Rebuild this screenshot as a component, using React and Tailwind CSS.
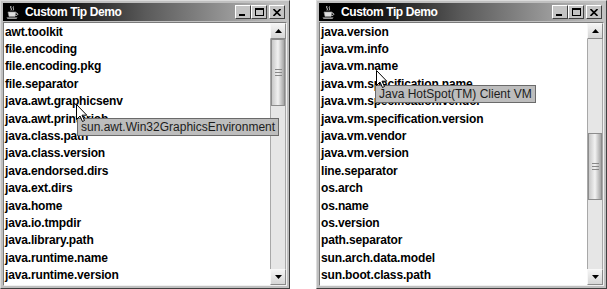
import React from 'react';

const leftItems = [
  'awt.toolkit',
  'file.encoding',
  'file.encoding.pkg',
  'file.separator',
  'java.awt.graphicsenv',
  'java.awt.printerjob',
  'java.class.path',
  'java.class.version',
  'java.endorsed.dirs',
  'java.ext.dirs',
  'java.home',
  'java.io.tmpdir',
  'java.library.path',
  'java.runtime.name',
  'java.runtime.version',
];

const rightItems = [
  'java.version',
  'java.vm.info',
  'java.vm.name',
  'java.vm.specification.name',
  'java.vm.specification.vendor',
  'java.vm.specification.version',
  'java.vm.vendor',
  'java.vm.version',
  'line.separator',
  'os.arch',
  'os.name',
  'os.version',
  'path.separator',
  'sun.arch.data.model',
  'sun.boot.class.path',
];

const JavaCup = () => (
  <svg width="15" height="15" viewBox="0 0 15 15">
    <path d="M6 1 C4.5 2.5 7.5 3.5 6 5.5 M8.5 1.5 C7.5 3 9.5 4 8 5.5" stroke="#d8d8d8" strokeWidth="1" fill="none" />
    <path d="M3 7 H11 L10 11.5 H4 Z" fill="#e0e0e0" stroke="#9a9a9a" strokeWidth="0.6" />
    <path d="M11 8 C13.5 8 13.5 10.5 10.5 10.5" stroke="#e0e0e0" strokeWidth="1" fill="none" />
    <path d="M1.5 12.5 H12.5 L11.5 13.8 H2.5 Z" fill="#c8c8c8" />
  </svg>
);

const TitleButton = ({ children, className = '' }) => (
  <div
    className={`w-[16px] h-[14px] bg-[#c4c4c4] border border-t-white border-l-white border-r-[#404040] border-b-[#404040] flex items-center justify-center ${className}`}
  >
    {children}
  </div>
);

const TitleBar = () => (
  <div className="h-[18px] shrink-0 flex items-center bg-gradient-to-r from-[#000000] via-[#5a5a5a] to-[#c4c4c4] pl-[2px] pr-[2px]">
    <JavaCup />
    <span className="ml-[5px] text-white font-bold text-[12px] tracking-[-0.4px] leading-none">Custom Tip Demo</span>
    <div className="ml-auto flex items-center">
      <TitleButton>
        <div className="w-[6px] h-[2px] bg-black mt-[6px] -ml-[2px]" />
      </TitleButton>
      <TitleButton>
        <div className="w-[9px] h-[8px] border border-black border-t-2" />
      </TitleButton>
      <TitleButton className="ml-[2px]">
        <svg width="8" height="7" viewBox="0 0 8 7">
          <path d="M0.5 0 L7.5 7 M7.5 0 L0.5 7" stroke="#000" strokeWidth="1.6" />
        </svg>
      </TitleButton>
    </div>
  </div>
);

const ArrowButton = ({ up }) => (
  <div className="w-[16px] h-[16px] shrink-0 bg-gradient-to-b from-[#f4f4f4] to-[#d6d6d6] border border-t-[#f8f8f8] border-l-[#f8f8f8] border-r-[#8a8a8a] border-b-[#8a8a8a] flex items-center justify-center">
    <svg width="7" height="4" viewBox="0 0 7 4">
      {up ? <path d="M3.5 0 L7 4 H0 Z" fill="#000" /> : <path d="M0 0 H7 L3.5 4 Z" fill="#000" />}
    </svg>
  </div>
);

const Scrollbar = ({ thumbTop }) => (
  <div className="w-[16px] shrink-0 flex flex-col bg-[#e6e6e6]">
    <ArrowButton up />
    <div className="flex-1 border-x border-[#a8a8a8] flex flex-col">
      <div
        className="w-full h-[67px] shrink-0 border border-[#8c8c8c] bg-gradient-to-r from-[#c8c8c8] via-[#f2f2f2] to-[#a4a4a4] flex flex-col items-center justify-center gap-[2px]"
        style={{ marginTop: thumbTop }}
      >
        <div className="w-[7px] h-[1px] bg-[#888888]" />
        <div className="w-[7px] h-[1px] bg-[#888888]" />
        <div className="w-[7px] h-[1px] bg-[#888888]" />
      </div>
    </div>
    <ArrowButton />
  </div>
);

const Cursor = ({ className }) => (
  <svg className={`absolute ${className}`} width="12" height="19" viewBox="0 0 12 19">
    <path
      d="M0.5 0.5 L0.5 15.5 L4 12 L6.5 17.5 L8.5 16.5 L6 11.2 L10.8 11.2 Z"
      fill="#ffffff"
      stroke="#000000"
      strokeWidth="1"
    />
  </svg>
);

const Window = ({ width, items, thumbTop, tip, tipLeft, tipTop, cursorClass }) => (
  <div
    className="relative h-[289px] bg-[#c0c0c0] border border-t-[#dcdcdc] border-l-[#dcdcdc] border-r-[#404040] border-b-[#404040] p-[2px] flex flex-col"
    style={{ width }}
  >
    <TitleBar />
    <div className="mt-[1px] flex-1 min-h-0 flex border border-t-[#7a7a7a] border-l-[#7a7a7a] border-r-[#f0f0f0] border-b-[#f0f0f0]">
      <div className="flex-1 bg-white overflow-hidden pl-[1px]">
        {items.map((item) => (
          <div key={item} className="h-[17.4px] flex items-center text-[12px] font-bold text-black tracking-[-0.15px] leading-none whitespace-nowrap">
            {item}
          </div>
        ))}
      </div>
      <Scrollbar thumbTop={thumbTop} />
    </div>
    <div
      className={`absolute ${tipLeft} ${tipTop} h-[18px] px-[3px] flex items-center bg-[#bdbdbd] border border-[#6a6a6a] text-[12px] text-[#1c1c1c] leading-none whitespace-nowrap`}
    >
      {tip}
    </div>
    <Cursor className={cursorClass} />
  </div>
);

export default function App() {
  return (
    <div className="w-[607px] h-[289px] bg-white flex justify-between overflow-hidden font-['Liberation_Sans',Arial,sans-serif]">
      <Window
        width={290}
        items={leftItems}
        thumbTop={0}
        tip="sun.awt.Win32GraphicsEnvironment"
        tipLeft="left-[76px]"
        tipTop="top-[117px]"
        cursorClass="left-[75px] top-[103px]"
      />
      <Window
        width={291}
        items={rightItems}
        thumbTop={94}
        tip="Java HotSpot(TM) Client VM"
        tipLeft="left-[58px]"
        tipTop="top-[84px]"
        cursorClass="left-[59px] top-[69px]"
      />
    </div>
  );
}
